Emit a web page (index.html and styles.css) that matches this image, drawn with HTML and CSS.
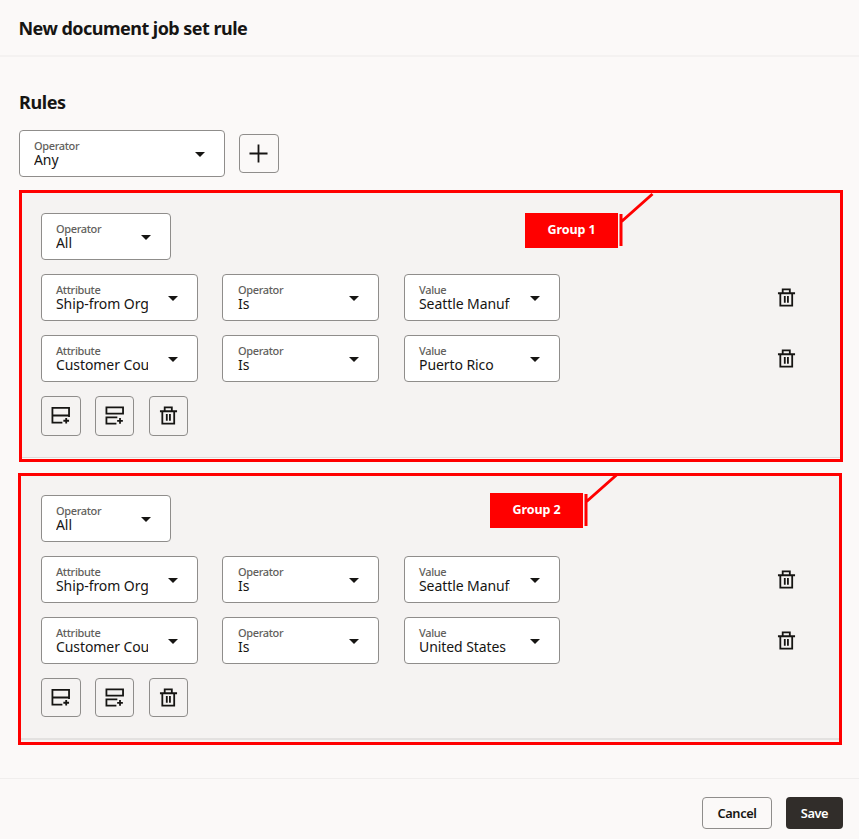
FILE: index.html
```html
<!DOCTYPE html>
<html lang="en">
<head>
<meta charset="utf-8">
<title>New document job set rule</title>
<link rel="stylesheet" href="styles.css">
</head>
<body>
<svg class="sprite" aria-hidden="true">
  <symbol id="trash" viewBox="0 0 20 20"><path d="M1 5.500h18M6 5.500v-4h7.500v4M3.500 5.500v13h12.500v-13M8.200 8.500v7M11.500 8.500v7" fill="none" stroke="currentColor" stroke-width="1.900"/></symbol>
  <symbol id="row" viewBox="0 0 20 20"><path d="M12 17.500H1.500V2h17.500v9.500M1.500 10H19M16 12.500v6M13 15.500h6" fill="none" stroke="currentColor" stroke-width="1.900"/></symbol>
  <symbol id="group" viewBox="0 0 20 20"><path d="M1.500 1.500H19v6.500H1.500zM13 12H1.500v6.500H12M15.800 12.700v6M12.800 15.700h6" fill="none" stroke="currentColor" stroke-width="1.900"/></symbol>
</svg>
<header class="header"><h1>New document job set rule</h1></header>
<main class="main">
  <h2>Rules</h2>
  <div class="top">
    <div class="field any"><label>Operator</label><span>Any</span></div>
    <button class="icon add" aria-label="Add"><svg viewBox="0 0 20 20"><path d="M10 .5v19M.5 10h19" fill="none" stroke="currentColor" stroke-width="1.900"/></svg></button>
  </div>
  <section class="set first">
    <div class="field all"><label>Operator</label><span>All</span></div>
    <div class="rule">
      <div class="field"><label>Attribute</label><span>Ship-from Organization</span></div>
      <div class="field operator"><label>Operator</label><span>Is</span></div>
      <div class="field value"><label>Value</label><span>Seattle Manufacturing</span></div>
      <svg class="delete"><use href="#trash"/></svg>
    </div>
    <div class="rule">
      <div class="field"><label>Attribute</label><span>Customer Country</span></div>
      <div class="field operator"><label>Operator</label><span>Is</span></div>
      <div class="field value"><label>Value</label><span>Puerto Rico</span></div>
      <svg class="delete"><use href="#trash"/></svg>
    </div>
    <div class="tools">
      <button class="icon"><svg><use href="#row"/></svg></button>
      <button class="icon"><svg><use href="#group"/></svg></button>
      <button class="icon"><svg><use href="#trash"/></svg></button>
    </div>
    <div class="callout"><b>Group 1</b><svg viewBox="0 0 40 56"><path d="M3 22v32M3 30L34.500 2" fill="none" stroke="#f00" stroke-width="3"/></svg></div>
  </section>
  <section class="set second">
    <div class="field all"><label>Operator</label><span>All</span></div>
    <div class="rule">
      <div class="field"><label>Attribute</label><span>Ship-from Organization</span></div>
      <div class="field operator"><label>Operator</label><span>Is</span></div>
      <div class="field value"><label>Value</label><span>Seattle Manufacturing</span></div>
      <svg class="delete"><use href="#trash"/></svg>
    </div>
    <div class="rule">
      <div class="field"><label>Attribute</label><span>Customer Country</span></div>
      <div class="field operator"><label>Operator</label><span>Is</span></div>
      <div class="field value"><label>Value</label><span>United States</span></div>
      <svg class="delete"><use href="#trash"/></svg>
    </div>
    <div class="tools">
      <button class="icon"><svg><use href="#row"/></svg></button>
      <button class="icon"><svg><use href="#group"/></svg></button>
      <button class="icon"><svg><use href="#trash"/></svg></button>
    </div>
    <div class="callout"><b>Group 2</b><svg viewBox="0 0 40 56"><path d="M3 22v32M3 30L33.500 3" fill="none" stroke="#f00" stroke-width="3"/></svg></div>
  </section>
</main>
<footer class="footer"><button class="btn cancel">Cancel</button><button class="btn save">Save</button></footer>
</body>
</html>
```
FILE: styles.css
```css
* { box-sizing: border-box; }
body {
  margin: 0;
  height: 839px;
  display: flex;
  flex-direction: column;
  overflow: hidden;
  background: #fbf9f8;
  color: #161513;
  font-family: "Noto Sans", sans-serif;
}
button { font-family: inherit; padding: 0; color: inherit; }
svg { display: block; }
.sprite { position: absolute; width: 0; height: 0; }
.header { height: 57px; padding: 16px 18.500px 0; border-bottom: 2px solid #f4f2f1; }
h1, h2 { margin: 0; font-size: 18px; line-height: 25px; font-weight: 700; letter-spacing: -0.53px; }
.main { flex: 1; padding: 33px 16px 0 18px; }
h2 { padding-left: 1px; letter-spacing: -0.4px; }
.top { display: flex; align-items: center; gap: 14px; margin: 15px 0 13px 1px; }
.field {
  position: relative;
  width: 157px;
  height: 47px;
  padding: 9px 49px 0 14px;
  border: 1px solid #8f8d8b;
  border-radius: 4px;
  background: #fff;
}
.field label { display: block; font-size: 11px; line-height: 12px; color: #625f5c; font-weight: 500; letter-spacing: -0.35px; }
.field span { display: block; font-size: 14px; line-height: 16px; white-space: nowrap; overflow-x: clip; letter-spacing: -0.08px; }
.field::after {
  content: "";
  position: absolute;
  right: 19px;
  top: 21px;
  border: 5px solid transparent;
  border-top-color: #161513;
  border-bottom: 0;
}
.field.any { width: 206px; }
.field.all { width: 130px; }
.field.value { width: 156px; }
.field.operator { padding-left: 15px; }
.icon {
  width: 39.600px;
  height: 39.600px;
  display: grid;
  place-items: center;
  border: 1px solid #8f8d8b;
  border-radius: 4px;
  background: transparent;
}
.icon svg, .delete { width: 19px; height: 19px; }
.set {
  position: relative;
  width: 824px;
  height: 272px;
  border: 3px solid #f00;
  padding: 20px 0 0 19px;
  display: flex;
  flex-direction: column;
  gap: 14px;
  background: linear-gradient(#f5f3f2 264px, #dddbda 264px, #dddbda 265px, #fbf9f8 265px);
}
.first { margin-left: 1px; }
.second { margin-top: 11px; padding: 18.600px 0 0 20px; background: linear-gradient(#f5f3f2 262px, #e3e1e0 262px, #e3e1e0 264px, #f5f3f2 264px); }
.rule { display: flex; align-items: center; }
.rule .field + .field { margin-left: 24px; }
.rule .value.field { margin-left: 25px; }
.delete { margin-left: 217px; }
.tools { display: flex; gap: 14.200px; }
.callout { position: absolute; left: 503px; top: 0; }
.second .callout { left: 469px; top: -3px; }
.callout b {
  display: block;
  width: 93px;
  height: 35px;
  margin-top: 20px;
  background: #f00;
  color: #fff;
  font-size: 12.500px;
  line-height: 33px;
  letter-spacing: -0.1px;
  text-align: center;
}
.callout svg { position: absolute; left: 93px; top: -1px; width: 40px; height: 56px; }
.footer {
  height: 61px;
  border-top: 1px solid #f0eeed;
  padding: 18px 16px 0;
  display: flex;
  justify-content: flex-end;
  gap: 14px;
}
.btn { height: 32px; border-radius: 4px; font-size: 12.800px; line-height: 28px; font-weight: 600; letter-spacing: -0.4px; }
.cancel { width: 70px; border: 1px solid #8f8d8b; background: transparent; }
.save { width: 57px; border: 0; background: #312d2a; color: #fff; }
```
